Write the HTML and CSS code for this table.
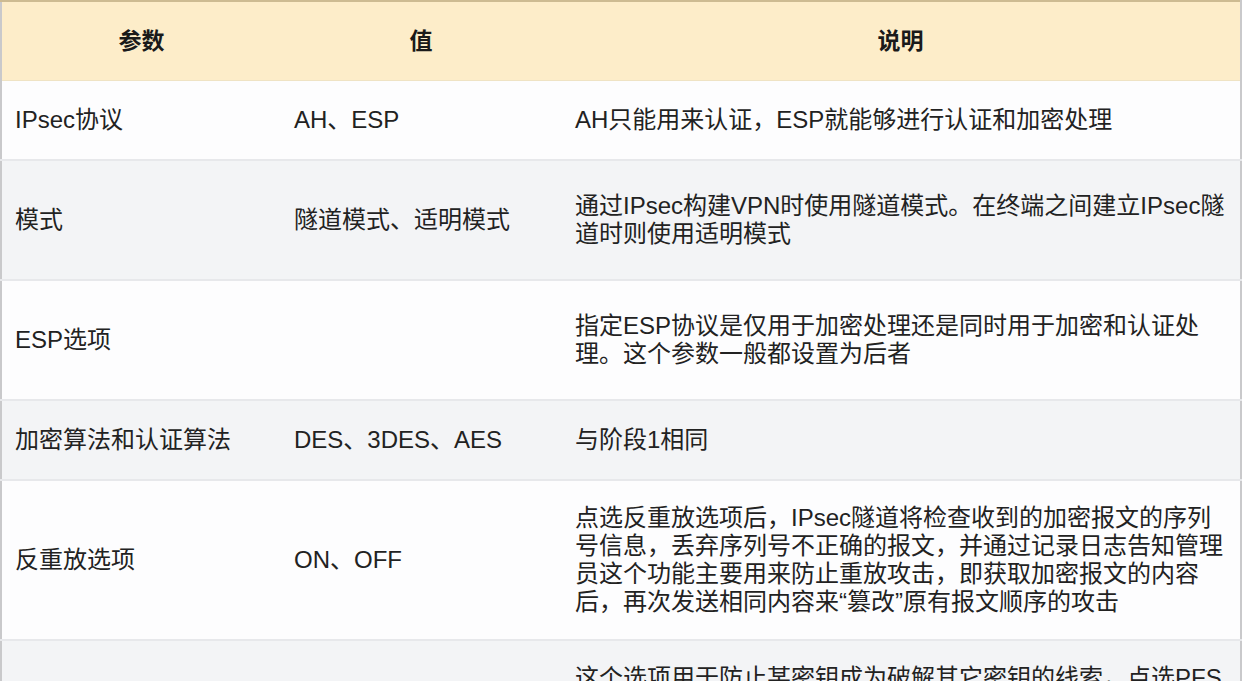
FILE: index.html
```html
<!DOCTYPE html>
<html lang="zh-CN">
<head>
<meta charset="utf-8">
<title>IPsec 参数</title>
<link rel="stylesheet" href="styles.css">
</head>
<body>
<table class="params">
  <colgroup>
    <col class="c-name">
    <col class="c-value">
    <col class="c-desc">
  </colgroup>
  <thead>
    <tr class="head">
      <th>参数</th>
      <th>值</th>
      <th>说明</th>
    </tr>
  </thead>
  <tbody>
    <tr class="r1 odd">
      <td>IPsec协议</td>
      <td>AH、ESP</td>
      <td class="desc">AH只能用来认证，ESP就能够进行认证和加密处理</td>
    </tr>
    <tr class="r2 even">
      <td>模式</td>
      <td>隧道模式、适明模式</td>
      <td class="desc">通过IPsec构建VPN时使用隧道模式。在终端之间建立IPsec隧道时则使用适明模式</td>
    </tr>
    <tr class="r2 odd">
      <td>ESP选项</td>
      <td></td>
      <td class="desc">指定ESP协议是仅用于加密处理还是同时用于加密和认证处理。这个参数一般都设置为后者</td>
    </tr>
    <tr class="r1 even">
      <td>加密算法和认证算法</td>
      <td>DES、3DES、AES</td>
      <td class="desc">与阶段1相同</td>
    </tr>
    <tr class="r4 odd">
      <td>反重放选项</td>
      <td>ON、OFF</td>
      <td class="desc">点选反重放选项后，IPsec隧道将检查收到的加密报文的序列号信息，丢弃序列号不正确的报文，并通过记录日志告知管理员这个功能主要用来防止重放攻击，即获取加密报文的内容后，再次发送相同内容来“篡改”原有报文顺序的攻击</td>
    </tr>
    <tr class="r4 even">
      <td>PFS</td>
      <td>ON、OFF</td>
      <td class="desc">这个选项用于防止某密钥成为破解其它密钥的线索，点选PFS后，每次进行阶段2协商时都会重新进行DH交换并生成新的密钥，即使某个密钥被破解，其它密钥也不会因此受到影响，从而提高安全性</td>
    </tr>
  </tbody>
</table>
</body>
</html>
```
FILE: styles.css
```css
html, body {
  margin: 0;
  padding: 0;
  overflow: hidden;
  background: #fdfdfe;
}

.params {
  width: 1242px;
  table-layout: fixed;
  border-collapse: collapse;
  font-family: "Liberation Sans", "Noto Sans CJK SC", sans-serif;
  font-size: 24px;
  line-height: 28px;
  color: #222222;
  border-top: 2px solid #cdbb92;
  border-left: 2px solid #c9c9cb;
  border-right: 2px solid #c9c9cb;
}

.c-name { width: 280px; }
.c-value { width: 280px; }

.head {
  height: 79px;
  background: #fdedc9;
}

.head th {
  font-weight: bold;
  font-size: 23px;
  color: #1a1a1a;
  text-align: center;
  vertical-align: middle;
  padding: 0;
  border-bottom: 1px solid #efe3c4;
}

td {
  padding: 0 12px 0 13px;
  vertical-align: middle;
  text-align: left;
  border-bottom: 2px solid #e7e8eb;
}

.desc {
  padding-left: 14px;
  padding-right: 8px;
}

.odd { background: #fdfdfe; }
.even { background: #f3f4f6; }

.r1 { height: 80px; }
.r2 { height: 120px; }
.r4 { height: 160px; }
```
